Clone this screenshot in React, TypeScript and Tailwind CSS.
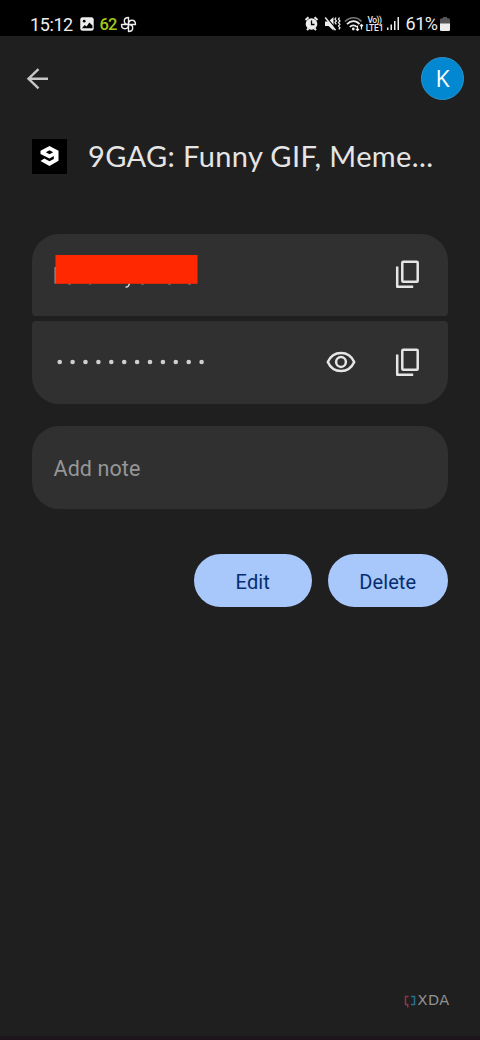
import React from 'react';

function CopyIcon() {
  return (
    <svg className="block h-[28px] w-[24px]" viewBox="0 0 24 28" fill="none" stroke="#e6e6e6" strokeWidth="2.5" strokeLinejoin="round">
      <rect x="7.300" y="1.800" width="15.400" height="20" rx="1" />
      <path d="M2.200 6.500v20.200h16" />
    </svg>
  );
}

function StatusBar() {
  return (
    <header className="relative h-9 shrink-0 bg-black text-[#ededed]">
      <div className="absolute left-[30px] top-[13px] flex h-[22px] items-center whitespace-nowrap">
        <span className="w-[49.500px] text-[18px] tracking-[-0.400px]">15:12</span>
        <svg className="h-[14px] w-[14px]" viewBox="0 0 15 15">
          <rect x=".3" y=".3" width="14.400" height="14.400" rx="2.500" fill="#ededed" />
          <circle cx="4.500" cy="4.500" r="1.500" fill="#000" />
          <path d="M2 12l3-3.500 2 1.600L10 6l3.300 3v3z" fill="#000" />
        </svg>
        <span className="ml-[6px] mt-[2px] w-[20.500px] text-[16.500px] font-medium tracking-[-1px] text-[#a4c817]">62</span>
        <svg className="h-[17px] w-[17px]" viewBox="0 0 17 17" fill="none" stroke="#ededed" strokeWidth="1.400" strokeLinejoin="round">
          <path d="M8.500 8.500V1.500C5.500 1.500 4.300 3 4.300 5s1.500 3.500 4.200 3.500zM8.500 8.500h7c0-3-1.500-4.200-3.500-4.200S8.500 5.800 8.500 8.500zM8.500 8.500v7c3 0 4.200-1.500 4.200-3.500S11.200 8.500 8.500 8.500zM8.500 8.500h-7c0 3 1.500 4.200 3.500 4.200s3.500-1.500 3.500-4.200z" />
        </svg>
      </div>
      <svg className="absolute left-[304px] top-[15px] h-[18px] w-[60px]" viewBox="0 0 60 18" fill="none" stroke="#ededed">
        <circle cx="7.500" cy="9" r="5.800" fill="#ededed" stroke="none" />
        <path d="M1.500 5l3-2.700M13.500 5l-3-2.700M3 15l1.500-1.500M12 15l-1.500-1.500" strokeWidth="2" />
        <path d="M7.500 5.500V9.500h3" stroke="#000" strokeWidth="1.300" />
        <path d="M21 6.500h3.500l5-4.500v13.500l-5-4.500H21z" fill="#ededed" stroke="none" />
        <path d="M22.500 2.500l10 12" stroke="#000" strokeWidth="1.300" />
        <path d="M21.200 2.500l10.300 12.800" strokeWidth="1.500" />
        <path d="M32 2.500l-1 1.700 1.400 1.700-1.400 1.700 1.400 1.700M35.500 2.500l-1 1.700 1.400 1.700-1.400 1.700 1.400 1.700-1.400 1.700 1.400 1.700-1 1.600" strokeWidth="1.300" />
        <path d="M41 6.500c5-5 12-5 16.500 0" stroke="#777" strokeWidth="1.700" />
        <path d="M43 9.200c4-4 9-4 12.500 0M45.800 12c2-2.300 5-2.300 7 0" strokeWidth="1.800" />
        <circle cx="49.300" cy="14" r="1.400" fill="#ededed" stroke="none" />
        <path d="M53.500 10.500v5m-1.500-1.500l1.500 1.500 1.500-1.500M57.500 14.500V9.500m-1.500 1.500l1.500-1.500 1.500 1.500" strokeWidth="1.200" />
      </svg>
      <div className="absolute left-[365.500px] top-[16px] w-[18px] whitespace-nowrap text-center text-[8.500px] font-medium leading-[8px]">
        <div className="tracking-[-0.500px]">Vo))</div>
        <div className="tracking-[-0.200px]">LTE1</div>
      </div>
      <svg className="absolute left-[387px] top-[17px] h-[13px] w-[13px]" viewBox="0 0 13 13" fill="#ededed">
        <path d="M0 10.500h1.500V13H0zM3.500 7.500H5V13H3.500zM7 4h1.500v9H7zM10.500 0H12v13h-1.500z" />
      </svg>
      <span className="absolute left-[405.500px] top-[12.500px] text-[18px] leading-[22px] tracking-[-0.450px]">61%</span>
      <svg className="absolute left-[440px] top-[17px] h-[14px] w-[10px]" viewBox="0 0 10 14">
        <path d="M3 0h4v1.200h1.500Q10 1.200 10 3v9.500Q10 14 8.500 14h-7Q0 14 0 12.500V3Q0 1.200 1.500 1.200H3z" fill="#555" />
        <path d="M0 6.500h10v6Q10 14 8.500 14h-7Q0 14 0 12.500z" fill="#ededed" />
      </svg>
    </header>
  );
}

export default function App() {
  return (
    <div className="flex h-[1040px] w-[480px] flex-col overflow-hidden bg-[#1f1f1f] font-['Roboto',sans-serif]">
      <StatusBar />
      <nav className="flex h-[85px] shrink-0 items-center justify-between pl-[26px] pr-4">
        <button aria-label="Back">
          <svg className="block h-[22px] w-[23px]" viewBox="0 0 23 22" fill="none" stroke="#c7c7c7" strokeWidth="2.400">
            <path d="M22 10.700H2.500M12.500 1.200L2.500 10.700l10 9.600" />
          </svg>
        </button>
        <div className="flex size-[43px] items-center justify-center rounded-full border border-[#2c94d0] bg-[#0288d1] font-['Open_Sans',sans-serif] text-[23px] font-medium text-white">K</div>
      </nav>
      <div className="mt-[17.500px] flex h-[35px] shrink-0 items-center px-8">
        <svg className="size-[35px] shrink-0 bg-black" viewBox="0 0 35 35">
          <path fillRule="evenodd" fill="#fff" d="M17.500 7l9 4.800v10l-9 5.200-9-5 3.800-2.500 5.200 2.700 4.300-2.300v-3l-4.300 2.700-9-4.600v-3.300zM17.500 11.300l-3.700 2 3.700 2 3.700-2z" />
        </svg>
        <h1 className="relative -top-px ml-[21px] whitespace-nowrap font-['Lato',sans-serif] text-[29px] leading-[35px] tracking-[0.370px] text-[#e5e5e5]">9GAG: Funny GIF, Meme...</h1>
      </div>
      <main className="mx-8 mt-[60px] flex flex-col">
        <section className="flex h-[82.500px] items-center justify-between rounded-b-[4px] rounded-t-[27px] bg-[#303030] pb-[2px] pl-[22px] pr-[29px]">
          <svg className="-mt-[4px] h-[36px] w-[146px]" viewBox="54 254 146 36">
            <path d="M55.200 267v16.500" stroke="#b5b5b5" strokeWidth="1.200" />
            <path d="M68 284h3M89 284h2M141 284h3M168 284h3M188 284h3" stroke="#888" strokeWidth="1" />
            <path d="M129.500 283q-.7 4.500-4 4" stroke="#d8d8d8" strokeWidth="1.600" fill="none" />
            <rect x="55.500" y="255" width="142" height="28.800" fill="#ff2800" />
          </svg>
          <CopyIcon />
        </section>
        <section className="mt-[5px] flex h-[82.500px] items-center rounded-b-[27px] rounded-t-[4px] bg-[#303030] pb-px pl-[25px] pr-[29px]">
          <svg className="h-[6px] w-[148px]" viewBox="0 0 148 6" fill="#cfcfcf">
            {Array.from({ length: 12 }, (_, i) => (
              <circle key={i} cx={2.7 + i * 12.9} cy="3" r="2.300" />
            ))}
          </svg>
          <svg className="ml-auto mr-[39px] h-[22px] w-[30px]" viewBox="0 0 30 22" fill="none" stroke="#e6e6e6" strokeWidth="2.500">
            <path d="M1.800 11C4.500 5 9.300 2 15 2s10.500 3 13.200 9C25.500 17 20.700 20 15 20S4.500 17 1.800 11z" />
            <circle cx="15" cy="11" r="4.900" />
          </svg>
          <CopyIcon />
        </section>
        <section className="mt-[22px] flex h-[83px] items-center rounded-[27px] bg-[#303030] pl-[21.500px] pt-[4px] text-[21.500px] tracking-[0.100px] text-[#969696]">Add note</section>
        <div className="mt-[45px] flex justify-end gap-4 text-[20px] text-[#062e6f]">
          <button className="h-[53.500px] w-[117.500px] rounded-full bg-[#a8c7fa] pt-[3px] tracking-[0.100px]">Edit</button>
          <button className="h-[53.500px] w-[120.500px] rounded-full bg-[#a8c7fa] pt-[3px] tracking-[0.100px]">Delete</button>
        </div>
      </main>
      <footer className="mt-auto flex h-[48px] shrink-0 items-start border-b-4 border-[#1c151a] pl-[404px] pt-[1px]">
        <svg className="mt-[2px] h-[13px] w-[12px]" viewBox="0 0 12 13" fill="none" strokeWidth="1.500">
          <path d="M4.500 1.500H1.500v8h2.200v3" stroke="#95304b" />
          <path d="M7 1.500h3.500v8H7" stroke="#28708c" />
        </svg>
        <span className="ml-[1.500px] font-['DejaVu_Sans',sans-serif] text-[14.500px] leading-[15px] tracking-[0.500px] text-[#929292]">XDA</span>
      </footer>
    </div>
  );
}
